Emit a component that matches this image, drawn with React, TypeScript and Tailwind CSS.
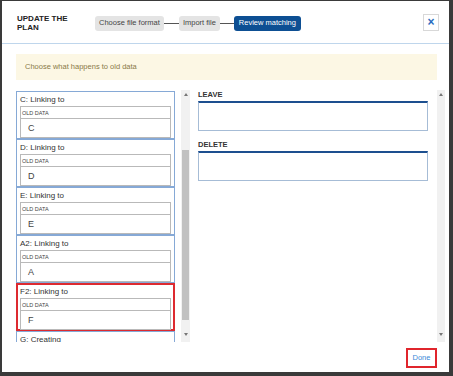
import React from 'react'

type Card = { id: string; title: string; value?: string; active?: boolean }

const cards: Card[] = [
  { id: 'c', title: 'C: Linking to', value: 'C' },
  { id: 'd', title: 'D: Linking to', value: 'D' },
  { id: 'e', title: 'E: Linking to', value: 'E' },
  { id: 'a2', title: 'A2: Linking to', value: 'A' },
  { id: 'f2', title: 'F2: Linking to', value: 'F', active: true },
  { id: 'g', title: 'G: Creating' },
]

function Step({ label, active }: { label: string; active?: boolean }) {
  return (
    <span
      className={
        active
          ? 'flex h-[15px] items-center rounded-[3px] bg-[#0d4f93] px-[5px] text-[7.5px] text-white'
          : 'flex h-[15px] items-center rounded-[3px] bg-[#e4e4e4] px-[4px] text-[7.5px] text-[#444]'
      }
    >
      {label}
    </span>
  )
}

function ScrollBar({ thumb }: { thumb?: boolean }) {
  return (
    <div className="relative h-full w-full bg-[#f1f1f1]">
      <span className="absolute left-1/2 top-[3px] -translate-x-1/2 border-x-[2px] border-b-[3px] border-x-transparent border-b-[#777]" />
      {thumb && <div className="absolute left-[1px] right-[1px] top-[60px] h-[170px] bg-[#c1c1c1]" />}
      <span className="absolute bottom-[6px] left-1/2 -translate-x-1/2 border-x-[2px] border-t-[3px] border-x-transparent border-t-[#777]" />
    </div>
  )
}

function MatchCard({ card }: { card: Card }) {
  return (
    <div
      className={
        card.active
          ? 'h-[48px] shrink-0 border-2 border-[#dd2a30] px-[2px]'
          : 'h-[48px] shrink-0 border border-[#86a9d6] px-[3px]'
      }
    >
      <div
        className={
          card.active
            ? 'h-[13px] text-[8px] leading-[13px] text-[#333]'
            : 'h-[14px] pt-[1px] text-[8px] leading-[13px] text-[#333]'
        }
      >
        {card.title}
      </div>
      {card.value && (
        <div className="border border-[#b9b9b9]">
          <div className="h-[11px] pl-[1px] text-[5.5px] leading-[12px] text-[#444]">OLD DATA</div>
          <div className="-mx-px -mb-px h-[20px] border border-[#b9b9b9] pl-[7px] text-[9px] leading-[18px] text-[#444]">
            {card.value}
          </div>
        </div>
      )}
    </div>
  )
}

function DropBox({ label }: { label: string }) {
  return (
    <div>
      <div className="h-[10px] text-[7.5px] font-bold leading-[7px] text-[#333]">{label}</div>
      <div className="h-[30px] border border-t-2 border-[#a6bcd6] border-t-[#1d4f8f] bg-white" />
    </div>
  )
}

export default function App() {
  return (
    <div className="h-[376px] w-[453px] bg-[#3a3a3a] pb-[4px] pl-[2px] pr-[4px] pt-[1px] font-['Liberation_Sans',Arial,sans-serif]">
      <div className="flex h-full flex-col bg-white">
        {/* Header */}
        <div className="flex h-[43px] shrink-0 items-center border-b border-[#bfd6ec] pl-[15px] pr-[10px] pt-[2px]">
          <div className="w-[78px] text-[8px] font-bold leading-[9px] text-[#222]">
            UPDATE THE
            <br />
            PLAN
          </div>
          <div className="flex items-center">
            <Step label="Choose file format" />
            <span className="h-px w-[15px] bg-[#555]" />
            <Step label="Import file" />
            <span className="h-px w-[14px] bg-[#555]" />
            <Step label="Review matching" active />
          </div>
          <button className="mb-[2px] ml-auto flex h-[17px] w-[16px] items-center justify-center border border-[#d8d8d8] text-[12px] font-bold leading-none text-[#2a6cc0]">
            ×
          </button>
        </div>

        {/* Body */}
        <div className="flex flex-1 flex-col pl-[14px] pr-[12px] pt-[10px]">
          <div className="flex h-[26px] shrink-0 items-center bg-[#fcf7e4] pl-[9px] text-[7.5px] text-[#8a7a48]">
            Choose what happens to old data
          </div>

          <div className="mr-[-8px] mt-[10px] flex h-[252px] shrink-0">
            <div className="flex h-full w-[159px] flex-col overflow-hidden pt-px">
              {cards.map((c) => (
                <MatchCard key={c.id} card={c} />
              ))}
            </div>
            <div className="ml-[6px] h-full w-[9px]">
              <ScrollBar thumb />
            </div>
            <div className="ml-[8px] flex w-[230px] flex-col gap-[10px] pt-[1px]">
              <DropBox label="LEAVE" />
              <DropBox label="DELETE" />
            </div>
            <div className="ml-[9px] h-full w-[8px]">
              <ScrollBar />
            </div>
          </div>

          <div className="mt-[6px] flex justify-end">
            <button className="flex h-[20px] w-[31px] items-center justify-center border-2 border-[#e0252c] text-[7.5px] text-[#3b8ad8]">
              Done
            </button>
          </div>
        </div>
      </div>
    </div>
  )
}
